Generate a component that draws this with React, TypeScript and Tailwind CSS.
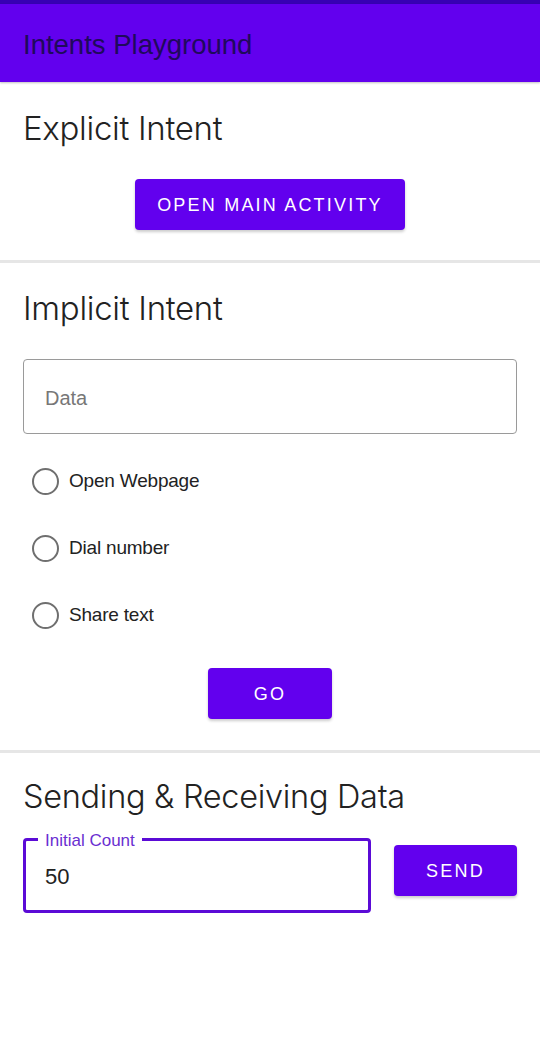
import React, { useState } from "react";

const options = ["Open Webpage", "Dial number", "Share text"];

export default function App() {
  const [data, setData] = useState("");
  const [count, setCount] = useState("50");
  const [choice, setChoice] = useState<string | null>(null);

  return (
    <div className="min-h-[1063px] w-[540px] bg-white font-['Liberation_Sans',Arial,sans-serif] text-[#222]">
      <div className="h-1 bg-[#3700b3]" />
      <header className="flex h-[78px] items-center bg-[#6200ee] px-[23px] pt-[3px] shadow-[0_1px_2px_rgba(0,0,0,0.25)]">
        <h1 className="text-[27.5px] text-[#1f0a5c]">Intents Playground</h1>
      </header>

      <section className="px-[23px] pt-[28px] pb-[30px]">
        <h2 className="font-['Inter',sans-serif] text-[33px] font-light leading-[36px] tracking-[-0.3px]">
          Explicit Intent
        </h2>
        <div className="mt-[33px] flex justify-center">
          <button className="h-[51px] w-[270px] rounded bg-[#6200ee] pt-[2px] text-[18px] tracking-[2.2px] text-white shadow-[0_2px_3px_rgba(0,0,0,0.2)]">
            OPEN MAIN ACTIVITY
          </button>
        </div>
      </section>

      <div className="h-[3px] bg-[#e6e6e6]" />

      <section className="px-[23px] pt-[27px] pb-[31px]">
        <h2 className="font-['Inter',sans-serif] text-[33px] font-light leading-[36px] tracking-[-0.3px]">
          Implicit Intent
        </h2>
        <input
          value={data}
          onChange={(e) => setData(e.target.value)}
          placeholder="Data"
          className="mt-[33px] h-[75px] w-full rounded border border-[#9a9a9a] px-[21px] pt-[3px] text-[20px] outline-none placeholder:text-[#777]"
        />
        <div className="mt-[14px] flex flex-col">
          {options.map((o) => (
            <label key={o} className="flex h-[67px] cursor-pointer items-center gap-[10px] pl-[9px]">
              <span className="flex h-[27px] w-[27px] items-center justify-center rounded-full border-[2.5px] border-[#6f6f6f]">
                {choice === o && <span className="h-[13px] w-[13px] rounded-full bg-[#6200ee]" />}
              </span>
              <input type="radio" className="hidden" checked={choice === o} onChange={() => setChoice(o)} />
              <span className="text-[19px] tracking-[-0.2px]">{o}</span>
            </label>
          ))}
        </div>
        <div className="mt-[19px] flex justify-center">
          <button className="h-[51px] w-[124px] rounded bg-[#6200ee] pt-[2px] text-[18px] tracking-[2.2px] text-white shadow-[0_2px_3px_rgba(0,0,0,0.2)]">
            GO
          </button>
        </div>
      </section>

      <div className="h-[3px] bg-[#e6e6e6]" />

      <section className="px-[23px] pt-[26px]">
        <h2 className="font-['Inter',sans-serif] text-[32.5px] font-light leading-[36px] tracking-[-0.3px]">
          Sending &amp; Receiving Data
        </h2>
        <div className="mt-[23px] flex items-center gap-[23px]">
          <div className="relative h-[75px] w-[348px] rounded border-[3px] border-[#5b0bd6]">
            <span className="absolute -top-[8px] left-[12px] bg-white px-[7px] text-[17px] leading-[16px] text-[#6a2fd1]">
              Initial Count
            </span>
            <input
              value={count}
              onChange={(e) => setCount(e.target.value)}
              className="h-full w-full bg-transparent px-[19px] pt-[2px] text-[22px] outline-none"
            />
          </div>
          <button className="mt-[-11px] h-[51px] w-[123px] rounded bg-[#6200ee] pt-[2px] text-[18px] tracking-[2.2px] text-white shadow-[0_2px_3px_rgba(0,0,0,0.2)]">
            SEND
          </button>
        </div>
      </section>
    </div>
  );
}
